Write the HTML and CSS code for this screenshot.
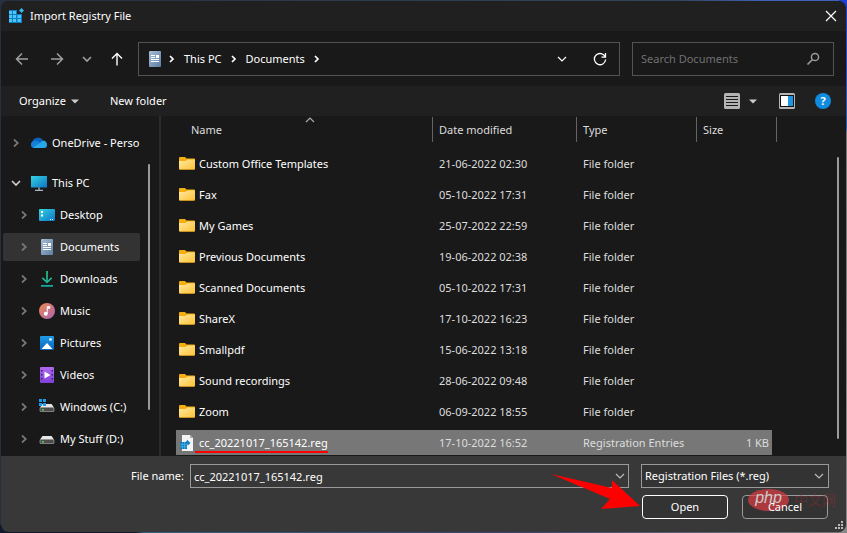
FILE: index.html
```html
<!DOCTYPE html>
<html lang="en">
<head>
<meta charset="utf-8">
<title>Import Registry File</title>
<link rel="stylesheet" href="styles.css">
</head>
<body>
<svg class="defs" aria-hidden="true">
  <defs>
    <linearGradient id="gFolder" x1="0" y1="0" x2="1" y2="1"><stop offset="0" stop-color="#ffe9a0"/><stop offset="1" stop-color="#fdc235"/></linearGradient>
    <linearGradient id="gScreen" x1="0" y1="0" x2="1" y2="1"><stop offset="0" stop-color="#35d3e0"/><stop offset="1" stop-color="#0c74c8"/></linearGradient>
    <linearGradient id="gDoc" x1="0" y1="0" x2="1" y2="1"><stop offset="0" stop-color="#a9bdd3"/><stop offset="1" stop-color="#5c7ea6"/></linearGradient>
    <linearGradient id="gMusic" x1="0" y1="0" x2="1" y2="1"><stop offset="0" stop-color="#f08a4c"/><stop offset="1" stop-color="#a962b8"/></linearGradient>
    <linearGradient id="gVideo" x1="0" y1="0" x2="0" y2="1"><stop offset="0" stop-color="#b06af0"/><stop offset="1" stop-color="#8040d8"/></linearGradient>
    <linearGradient id="gPic" x1="0" y1="0" x2="0" y2="1"><stop offset="0" stop-color="#1f9be8"/><stop offset="1" stop-color="#0b63bd"/></linearGradient>
    <linearGradient id="gDown" x1="0" y1="0" x2="0" y2="1"><stop offset="0" stop-color="#2fd08a"/><stop offset="1" stop-color="#14a79b"/></linearGradient>
  </defs>
  <symbol id="folder" viewBox="0 0 16 16"><path d="M0 2q0-1 1-1h5l1.500 1.500H15q1 0 1 1V8H0z" fill="#f5ae10"/><path d="M0 5h6.500L8.500 3.500H16v9q0 1-1 1H1q-1 0-1-1z" fill="url(#gFolder)"/><path d="M.5 13.500h15" stroke="#d99a22" stroke-width=".8"/></symbol>
  <symbol id="doc" viewBox="0 0 16 16"><rect x="2" width="12" height="16" rx="1" fill="url(#gDoc)"/><path d="M4 4.500h4M4 6.500h4M4 8.500h8M4 10.500h8" stroke="#fff"/><rect x="9" y="4" width="3" height="3" fill="#fff"/></symbol>
  <symbol id="chev" viewBox="0 0 8 10"><path d="M2 1.500 5.800 5 2 8.500" fill="none" stroke="currentColor" stroke-width="1.700"/></symbol>
  <symbol id="crumb" viewBox="0 0 8 10"><path d="M2 2 5 5 2 8" fill="none" stroke="currentColor" stroke-width="1.700"/></symbol>
  <symbol id="down" viewBox="0 0 10 8"><path d="M1 2l4 4 4-4" fill="none" stroke="currentColor" stroke-width="1.200"/></symbol>
  <symbol id="drive" viewBox="0 0 16 16"><path d="M1 8.500 3.500 5h9L15 8.500z" fill="#e6e6e6"/><rect x="1" y="8.500" width="14" height="4" rx=".5" fill="#4c4c4c" stroke="#b5b5b5" stroke-width=".6"/><path d="M3 10h2v1.500H3z" fill="#4fd04f"/></symbol>
</svg>

<div class="window">
  <header class="titlebar">
    <svg class="i16" viewBox="0 0 16 16"><path d="M1 2h8v4h5v9H1z" fill="#0a7fc6"/><path d="M1 3h3v3H1zM5 3h3v3H5zM1 7h3v3H1zM5 7h3v3H5zM9.500 7h3.500v3H9.500zM1 11h3v3H1zM5 11h3v3H5zM9.500 11h3.500v3H9.500z" fill="#4fc4fb"/><path d="M13.500 0 16 2.500 13.500 5 11 2.500z" fill="#35b5f3"/></svg>
    <h1>Import Registry File</h1>
    <button class="plain close" aria-label="Close"><svg width="12" height="12" viewBox="0 0 12 12"><path d="M1 1l10 10M11 1 1 11" stroke="#fff" stroke-width="1.200"/></svg></button>
  </header>

  <div class="navbar">
    <button class="plain dim back" aria-label="Back"><svg width="14" height="14" viewBox="0 0 14 14"><path d="M13 7H1.500M7 1.500 1.500 7 7 12.500" fill="none" stroke="currentColor" stroke-width="1.500"/></svg></button>
    <button class="plain dim" aria-label="Forward"><svg width="14" height="14" viewBox="0 0 14 14"><path d="M1 7h11.500M7 1.500 12.500 7 7 12.500" fill="none" stroke="currentColor" stroke-width="1.500"/></svg></button>
    <button class="plain dim" aria-label="Recent locations"><svg width="10" height="8" viewBox="0 0 10 8"><path d="M1 2l4 4 4-4" fill="none" stroke="currentColor" stroke-width="1.600"/></svg></button>
    <button class="plain" aria-label="Up"><svg width="14" height="14" viewBox="0 0 14 14"><path d="M7 13.500V1.500M2 6.500 7 1.500l5 5" fill="none" stroke="currentColor" stroke-width="1.400"/></svg></button>
    <nav class="address" aria-label="Address">
      <svg class="i16"><use href="#doc"/></svg>
      <svg class="chev"><use href="#crumb"/></svg>
      <a href="#">This PC</a>
      <svg class="chev"><use href="#crumb"/></svg>
      <a href="#">Documents</a>
      <svg class="chev"><use href="#crumb"/></svg>
      <button class="plain history" aria-label="Previous locations"><svg class="down"><use href="#down"/></svg></button>
      <button class="plain" aria-label="Refresh"><svg width="14" height="14" viewBox="0 0 14 14"><path d="M12.200 5A5.600 5.600 0 1 0 12.600 7.500M12.500 1v4.200H8.500" fill="none" stroke="currentColor" stroke-width="1.300"/></svg></button>
    </nav>
    <div class="search">
      <input type="text" placeholder="Search Documents" aria-label="Search Documents">
      <svg width="14" height="14" viewBox="0 0 14 14"><circle cx="9" cy="5" r="3.600" fill="none" stroke="#999" stroke-width="1.500"/><path d="M6.500 7.500 1.500 12.500" stroke="#999" stroke-width="1.700"/></svg>
    </div>
  </div>

  <div class="toolbar">
    <button class="plain organize">Organize <svg width="8" height="5" viewBox="0 0 8 5"><path d="M0 .5h8L4 4.500z" fill="#ccc"/></svg></button>
    <button class="plain">New folder</button>
    <button class="plain view" aria-label="View"><svg class="i16" viewBox="0 0 16 16"><rect width="16" height="16" rx="1.500" fill="#b4b4b4"/><path d="M2 3.500h12M2 6.500h12M2 9.500h12M2 12.500h12" stroke="#1a1a1a"/></svg><svg width="8" height="5" viewBox="0 0 8 5"><path d="M0 .5h8L4 4.500z" fill="#ccc"/></svg></button>
    <button class="plain" aria-label="Preview pane"><svg class="i16" viewBox="0 0 16 16"><rect width="16" height="16" rx="1.500" fill="#b4b4b4"/><path d="M1 2h14v12H1z" fill="#111"/><path d="M2 3h7v10H2z" fill="#fff"/><path d="M9 3h5v10H9z" fill="#1a96e4"/></svg></button>
    <button class="plain help" aria-label="Help">?</button>
  </div>

  <main class="content">
    <nav class="tree" aria-label="Folders">
      <ul>
        <li class="root"><a href="#"><svg class="chev"><use href="#chev"/></svg><svg class="i16" viewBox="0 0 16 16"><path d="M1.500 8.500a4.500 4.500 0 0 1 4-5.500 5 5 0 0 1 6.500 2.500L9 10z" fill="#0a64bd"/><path d="M0 10a3.500 3.500 0 0 1 4-4q2-.8 4 1l4 3-5 3H3.500Q0 13 0 10z" fill="#1681d8"/><path d="M2 12.500 9 8q1.500-2.500 4-2.500 3 1 3 4.500 0 3-3 3H3z" fill="#28a8ea"/></svg><span>OneDrive - Perso</span></a></li>
        <li class="root open"><a href="#"><svg class="chev-open" viewBox="0 0 10 8"><path d="M1 2l4 4 4-4" fill="none" stroke="currentColor" stroke-width="1.700"/></svg><svg class="i16" viewBox="0 0 16 16"><path d="M0 1h16v11.500H0z" fill="url(#gScreen)"/><path d="M8 12.500V15M4 15.300h8" stroke="#a9b4bd" stroke-width="1.300"/></svg><span>This PC</span></a></li>
        <li><a href="#"><svg class="chev"><use href="#chev"/></svg><svg class="i16" viewBox="0 0 16 16"><rect y="2" width="16" height="12" rx="1" fill="url(#gScreen)"/><path d="M2 4h2v2H2zM2 7.500h2v2H2zM11 12h1v1h-1zM13 12h1v1h-1z" fill="#fff"/></svg><span>Desktop</span></a></li>
        <li><a href="#" class="current" aria-current="true"><svg class="chev"><use href="#chev"/></svg><svg class="i16"><use href="#doc"/></svg><span>Documents</span></a></li>
        <li><a href="#"><svg class="chev"><use href="#chev"/></svg><svg class="i16" viewBox="0 0 16 16"><path d="M7.200 0h1.600v9.500l3.300-3.200 1.100 1.100L8 12.500 2.800 7.400l1.100-1.100 3.300 3.200zM2 14h12v1.800H2z" fill="url(#gDown)"/></svg><span>Downloads</span></a></li>
        <li><a href="#"><svg class="chev"><use href="#chev"/></svg><svg class="i16" viewBox="0 0 16 16"><circle cx="8" cy="8" r="8" fill="url(#gMusic)"/><circle cx="6.800" cy="10.800" r="2" fill="#fff"/><path d="M8.200 11V3.500h2.600v1.800H8.800" fill="#fff" stroke="#fff" stroke-width=".8"/></svg><span>Music</span></a></li>
        <li><a href="#"><svg class="chev"><use href="#chev"/></svg><svg class="i16" viewBox="0 0 16 16"><rect x="1" y="1" width="14" height="14" rx="1" fill="url(#gPic)"/><path d="M2.500 14 8 8l5.500 6z" fill="#fff"/><circle cx="11.500" cy="4.500" r="1.300" fill="#fff"/></svg><span>Pictures</span></a></li>
        <li><a href="#"><svg class="chev"><use href="#chev"/></svg><svg class="i16" viewBox="0 0 16 16"><rect x="1" width="14" height="16" rx="1" fill="url(#gVideo)"/><path d="M2 3h1.500v1.500H2zM2 7h1.500v1.500H2zM2 11h1.500v1.500H2zM12.500 3H14v1.500h-1.500zM12.500 7H14v1.500h-1.500zM12.500 11H14v1.500h-1.500z" fill="#38206b"/><path d="M5.500 4.500 11.500 8l-6 3.500z" fill="#fff"/></svg><span>Videos</span></a></li>
        <li><a href="#"><svg class="chev"><use href="#chev"/></svg><svg class="i16" viewBox="0 0 16 16"><use href="#drive"/><path d="M0 0h3v3H0zM4 0h3v3H4zM0 4h3v3H0zM4 4h3v3H4z" fill="#1e9be8"/></svg><span>Windows (C:)</span></a></li>
        <li><a href="#"><svg class="chev"><use href="#chev"/></svg><svg class="i16"><use href="#drive"/></svg><span>My Stuff (D:)</span></a></li>
      </ul>
      <div class="thumb"></div>
    </nav>

    <section class="files">
      <table>
        <colgroup><col class="c-name"><col class="c-date"><col class="c-type"><col class="c-size"><col class="c-end"></colgroup>
        <thead><tr>
          <th><div>Name<svg class="sort" viewBox="0 0 10 6"><path d="M1 5l4-4 4 4" fill="none" stroke="#aaa" stroke-width="1.200"/></svg></div></th>
          <th><div>Date modified</div></th><th><div>Type</div></th><th><div>Size</div></th><th><div></div></th>
        </tr></thead>
        <tbody>
          <tr><td><span class="name"><svg class="i16"><use href="#folder"/></svg>Custom Office Templates</span></td><td>21-06-2022 02:30</td><td>File folder</td><td></td></tr>
          <tr><td><span class="name"><svg class="i16"><use href="#folder"/></svg>Fax</span></td><td>05-10-2022 17:31</td><td>File folder</td><td></td></tr>
          <tr><td><span class="name"><svg class="i16"><use href="#folder"/></svg>My Games</span></td><td>25-07-2022 22:59</td><td>File folder</td><td></td></tr>
          <tr><td><span class="name"><svg class="i16"><use href="#folder"/></svg>Previous Documents</span></td><td>19-06-2022 02:38</td><td>File folder</td><td></td></tr>
          <tr><td><span class="name"><svg class="i16"><use href="#folder"/></svg>Scanned Documents</span></td><td>05-10-2022 17:31</td><td>File folder</td><td></td></tr>
          <tr><td><span class="name"><svg class="i16"><use href="#folder"/></svg>ShareX</span></td><td>17-10-2022 16:23</td><td>File folder</td><td></td></tr>
          <tr><td><span class="name"><svg class="i16"><use href="#folder"/></svg>Smallpdf</span></td><td>15-06-2022 13:18</td><td>File folder</td><td></td></tr>
          <tr><td><span class="name"><svg class="i16"><use href="#folder"/></svg>Sound recordings</span></td><td>28-06-2022 09:48</td><td>File folder</td><td></td></tr>
          <tr><td><span class="name"><svg class="i16"><use href="#folder"/></svg>Zoom</span></td><td>06-09-2022 18:55</td><td>File folder</td><td></td></tr>
          <tr class="selected"><td><span class="name"><svg class="i16" viewBox="0 0 16 16"><path d="M3 0h8l3 3v13H3z" fill="#f4f4f4"/><path d="M11 0v3h3z" fill="#aaa"/><path d="M1 7h7v7H1z" fill="#0a78b8"/><path d="M1 9.300h7M1 11.700h7M3.300 7v7M5.700 7v7" stroke="#63c4ee" stroke-width=".6"/><path d="M8.500 5l3 3-2.500 2.500L6.500 7z" fill="#1683c0"/></svg><span class="marked">cc_20221017_165142.reg</span></span></td><td>17-10-2022 16:52</td><td>Registration Entries</td><td class="size">1 KB</td></tr>
        </tbody>
      </table>
      <div class="thumb"></div>
    </section>
  </main>

  <footer class="bottom">
    <label for="fname">File name:</label>
    <div class="combo">
      <input id="fname" type="text" value="cc_20221017_165142.reg">
      <button class="plain" aria-label="Show recent names"><svg class="down"><use href="#down"/></svg></button>
    </div>
    <div class="side">
      <div class="combo type">
        <select aria-label="File type"><option>Registration Files (*.reg)</option></select>
        <svg class="down"><use href="#down"/></svg>
      </div>
      <div class="actions">
        <button class="action primary">Open</button>
        <button class="action"><span class="caption">Cancel</span></button>
      </div>
      <svg class="pointer" viewBox="0 0 90 36" aria-hidden="true"><path d="M0 0 61 14 61 6 89 32 50 35 59 25Z" fill="#f00"/></svg>
      <div class="mark"><b>php</b><span>中文网</span></div>
    </div>
    <svg class="grip" viewBox="0 0 9 9"><path d="M6 0h2v2H6zM3 3h2v2H3zM6 3h2v2H6zM0 6h2v2H0zM3 6h2v2H3zM6 6h2v2H6z" fill="#bbb"/></svg>
  </footer>
</div>
</body>
</html>
```
FILE: styles.css
```css
* { box-sizing: border-box; }

body {
  margin: 0;
  height: 100vh;
  padding: 1px;
  overflow: hidden;
  background:
    linear-gradient(#1c3fd0, #2a5cb0 24%, #777 25%, #888) right / 8px 100% no-repeat,
    linear-gradient(90deg, #101a2c 16%, #2f5f80 17%, #3a4470 60%, #777) bottom / 100% 8px no-repeat,
    linear-gradient(90deg, #26303e, #33455c 80%, #3d62b8 90%);
  color: #fff;
  font: 11px/16px "Noto Sans", "Noto Sans CJK SC", sans-serif;
}

.defs { position: absolute; width: 0; height: 0; }
svg { display: block; flex: none; }
a { color: inherit; text-decoration: none; }
input, select, button { font: inherit; color: inherit; }
.i16 { width: 16px; height: 16px; }
.chev { width: 8px; height: 10px; }
.down { width: 10px; height: 8px; }

.plain {
  display: flex;
  align-items: center;
  padding: 0;
  border: 0;
  background: none;
}
.dim { color: #a0a0a0; }

.window {
  display: flex;
  flex-direction: column;
  height: 100%;
  border-radius: 8px;
  overflow: hidden;
  background: #191919;
}

.titlebar {
  display: flex;
  align-items: center;
  height: 30px;
  padding: 0 9px 0 7px;
  background: #202020;
}
.titlebar h1 { margin: 0 0 0 6px; font: inherit; }
.close { margin-left: auto; }

.navbar {
  display: flex;
  align-items: center;
  gap: 18px;
  height: 55px;
  padding: 0 12px 0 14px;
}
.back { margin-right: 3px; }

.address, .search {
  display: flex;
  align-items: center;
  height: 34px;
  border: 1px solid #535353;
}
.address { flex: 1; gap: 8px; margin-left: -4px; padding: 0 12px 0 8px; }
.address .i16 { margin-right: -3px; }
.history { margin: 0 18px 0 auto; }
.search { width: 202px; margin-left: -6px; padding: 0 13px 0 8px; }
.search input {
  flex: 1;
  min-width: 0;
  padding: 0;
  border: 0;
  outline: 0;
  background: none;
}
.search input::placeholder { color: #707070; opacity: 1; }

.toolbar {
  display: flex;
  align-items: center;
  gap: 22px;
  height: 30px;
  padding: 0 15px 0 18px;
  background: #202020;
}
.organize { gap: 5px; margin-right: 9px; }
.view { gap: 9px; margin-left: auto; }
.help {
  justify-content: center;
  width: 16px;
  height: 16px;
  margin-left: -2px;
  border-radius: 50%;
  background: #0f8be0;
  font-weight: bold;
}

.content { display: flex; flex: 1; min-height: 0; }

.tree {
  display: flex;
  width: 160px;
  flex: none;
  border-right: 2px solid #2b2b2b;
  overflow: hidden;
}
.tree ul { width: 139px; margin: 0; padding: 13px 0 0 2px; list-style: none; }
.tree li { height: 32px; }
.tree li.open { margin-top: 8px; }
.tree a {
  display: flex;
  align-items: center;
  height: 28px;
  padding-left: 17px;
  border-radius: 2px;
  white-space: nowrap;
}
.tree .root a { padding-left: 9px; }
.tree .i16 { margin: 0 5px 0 11px; }
.tree .chev { color: #777; }
.chev-open { width: 10px; height: 8px; margin: 0 -1px; color: #ccc; }
.tree .current { background: #333; }
.thumb { width: 2px; border-radius: 1px; background: #9a9a9a; }
.tree .thumb { height: 246px; margin: 48px 0 0 8px; }

.files {
  display: flex;
  flex: 1;
  justify-content: space-between;
  min-width: 0;
  padding: 1px 7px 0 15px;
  overflow: hidden;
}
.files .thumb { height: 282px; margin-top: 40px; }

table { width: 601px; align-self: flex-start; table-layout: fixed; border-collapse: separate; border-spacing: 0; }
.c-name { width: 256px; }
.c-date { width: 144px; }
.c-type { width: 120px; }
.c-size { width: 76px; }
.c-end { width: 5px; }
th { height: 31px; padding: 0; text-align: left; vertical-align: top; font-weight: normal; color: #ddd; }
th div { position: relative; height: 25px; padding-left: 6px; line-height: 25px; border-left: 1px solid #646464; }
th:first-child div { padding-left: 14px; border-left-color: transparent; }
th:last-child div { margin-left: 4px; padding: 0; }
.sort { position: absolute; top: 0; left: 50%; width: 10px; height: 6px; }
td {
  height: 31px;
  padding: 0 0 0 7px;
  border: solid transparent;
  border-width: 3px 0;
  background-clip: padding-box;
  color: #ddd;
  white-space: nowrap;
}
td:first-child { padding-left: 3px; color: #fff; }
.name { display: flex; align-items: center; gap: 4px; }
.selected td { background-color: #777; }
.selected .size { padding-right: 3px; text-align: right; }
.marked { position: relative; }
.marked::after {
  content: "";
  position: absolute;
  left: -4px;
  right: 0;
  bottom: -2px;
  height: 2px;
  background: #f00;
}

.bottom {
  position: relative;
  display: flex;
  align-items: flex-start;
  height: 76px;
  padding: 8px 17px 0 130px;
  background: #383838;
}
.bottom label { width: 59px; line-height: 24px; white-space: nowrap; }
.bottom .down { color: #bbb; }
.combo {
  display: flex;
  flex: 1;
  align-items: center;
  height: 24px;
  padding-right: 3px;
  border: 1px solid #9a9a9a;
}
.combo input {
  flex: 1;
  min-width: 0;
  height: 22px;
  padding: 0 3px;
  border: 0;
  outline: 0;
  background: none;
}
.side { position: relative; width: 188px; margin-left: 12px; }
.type { position: relative; background: #333; padding: 0; }
.type select {
  width: 100%;
  height: 22px;
  padding: 0 3px;
  border: 0;
  outline: 0;
  appearance: none;
  background: none;
}
.type .down { position: absolute; right: 4px; pointer-events: none; }
.actions { display: flex; justify-content: space-between; padding: 7px 1px 0; }
.action {
  width: 86px;
  height: 24px;
  padding: 0;
  border: 1px solid #9a9a9a;
  border-radius: 4px;
  background: #333;
}
.primary { border-color: #fff; }
.caption { position: relative; z-index: 1; }
.pointer { position: absolute; left: -90px; top: 10px; width: 90px; height: 36px; }
.mark { position: absolute; left: 107px; top: 25px; display: flex; align-items: center; gap: 5px; white-space: nowrap; pointer-events: none; }
.mark b {
  width: 41px;
  height: 22px;
  border-radius: 50%;
  background: rgba(222, 60, 65, 0.7);
  color: #ccc;
  font: italic 16px/18px "Liberation Sans", sans-serif;
  text-align: center;
}
.mark span { color: rgba(170, 40, 45, 0.4); font-size: 14px; line-height: 22px; }
.grip { position: absolute; right: 2px; bottom: 2px; width: 9px; height: 9px; }
```
